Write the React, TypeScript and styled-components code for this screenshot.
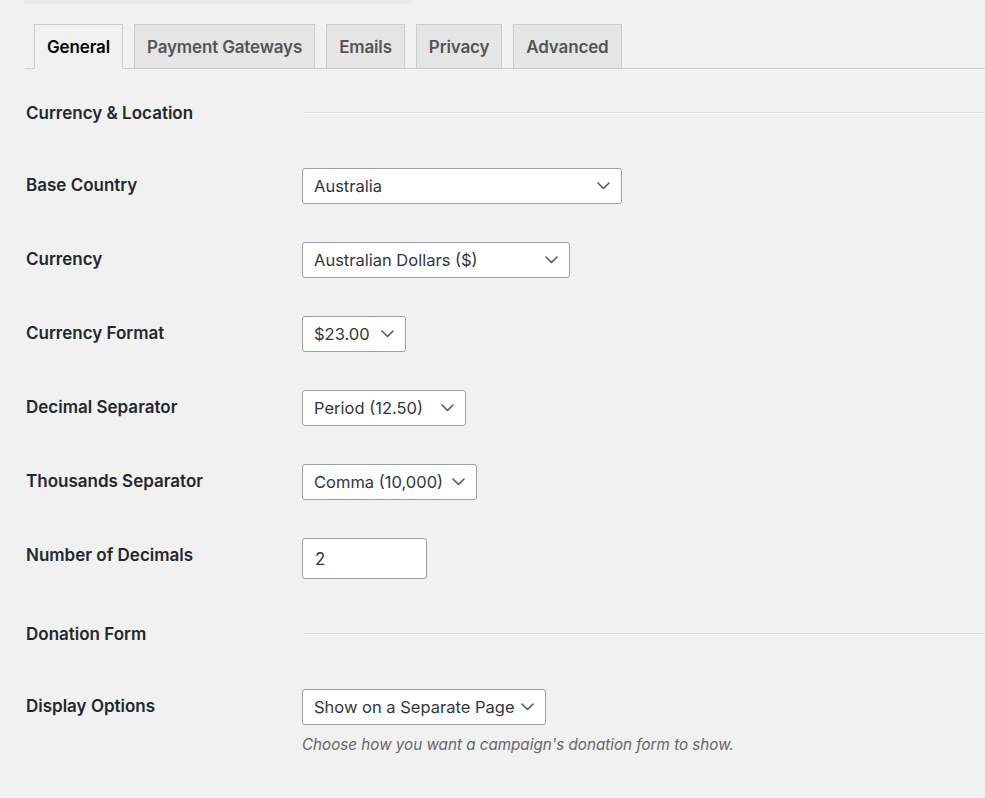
import React from 'react';
import styled, { createGlobalStyle } from 'styled-components';

const GlobalStyle = createGlobalStyle`
  html, body {
    margin: 0;
    padding: 0;
    background: #f1f1f1;
  }
  body {
    font-family: Inter, "Noto Sans", "Liberation Sans", sans-serif;
    color: #23282d;
  }
`;

const Page = styled.div`
  width: 985px;
  min-height: 798px;
  overflow: hidden;
`;

const TopStrip = styled.div`
  height: 3px;
  width: 388px;
  margin-left: 24px;
  background: #e9e9e9;
  border-bottom: 1px solid #ececec;
`;

const TabNav = styled.nav`
  display: flex;
  gap: 11px;
  margin: 20px 0 0 25px;
  padding-left: 9px;
  border-bottom: 1px solid #ccc;
`;

const Tab = styled.a<{ $active?: boolean }>`
  display: flex;
  align-items: center;
  height: 43px;
  padding: 0 12px;
  margin-bottom: -1px;
  border: 1px solid #ccc;
  border-bottom-color: ${(p) => (p.$active ? '#f1f1f1' : '#ccc')};
  background: ${(p) => (p.$active ? '#f1f1f1' : '#e5e5e5')};
  color: ${(p) => (p.$active ? '#000' : '#555')};
  font-size: 17px;
  font-weight: 600;
  letter-spacing: -0.15px;
  text-decoration: none;
  cursor: pointer;
`;

const Form = styled.div`
  display: flex;
  flex-direction: column;
  gap: 45px;
  padding: 34px 0 0 26px;
`;

const Section = styled.section`
  display: flex;
  flex-direction: column;
  gap: 38px;
`;

const SectionHead = styled.div`
  display: grid;
  grid-template-columns: 278px 1fr;
  align-items: center;
  height: 20px;
  margin-bottom: 7px;
`;

const SectionTitle = styled.h3`
  margin: 0;
  font-size: 17px;
  font-weight: 600;
  color: #23282d;
`;

const Rule = styled.hr`
  margin: 0;
  border: 0;
  border-top: 1px solid #dcdcdc;
  border-bottom: 1px solid #fafafa;
`;

const Row = styled.div`
  display: grid;
  grid-template-columns: 276px 1fr;
  align-items: start;
`;

const Label = styled.label`
  box-sizing: border-box;
  display: flex;
  align-items: center;
  height: 36px;
  padding-bottom: 2px;
  font-size: 17px;
  font-weight: 600;
  color: #23282d;
`;

const Field = styled.div`
  display: flex;
  flex-direction: column;
  align-items: flex-start;
`;

const SelectBox = styled.div<{ $width: number }>`
  box-sizing: border-box;
  display: flex;
  align-items: center;
  justify-content: space-between;
  width: ${(p) => p.$width}px;
  height: 36px;
  padding: 0 11px 0 11px;
  background: #fff;
  border: 1px solid #9a9fa5;
  border-radius: 3px;
  font-size: 16.5px;
  color: #32373c;
  white-space: nowrap;
`;

const TextInput = styled.div<{ $width: number }>`
  box-sizing: border-box;
  display: flex;
  align-items: center;
  width: ${(p) => p.$width}px;
  height: 41px;
  padding: 0 12px;
  background: #fff;
  border: 1px solid #9a9fa5;
  border-radius: 3px;
  font-size: 17px;
  color: #32373c;
`;

const Description = styled.p`
  margin: 10px 0 0;
  font-size: 15.2px;
  font-style: italic;
  line-height: 20px;
  color: #666;
`;

const Chevron = () => (
  <svg width="13" height="8" viewBox="0 0 13 8" fill="none">
    <polyline points="1,1 6.5,6.5 12,1" stroke="#555d66" strokeWidth="1.6" strokeLinecap="round" strokeLinejoin="round" />
  </svg>
);

type SelectProps = { value: string; width: number };

const Select: React.FC<SelectProps> = ({ value, width }) => (
  <SelectBox $width={width}>
    <span>{value}</span>
    <Chevron />
  </SelectBox>
);

const tabs = ['General', 'Payment Gateways', 'Emails', 'Privacy', 'Advanced'];

const App: React.FC = () => {
  return (
    <Page>
      <GlobalStyle />
      <TopStrip />
      <TabNav>
        {tabs.map((t) => (
          <Tab key={t} $active={t === 'General'}>{t}</Tab>
        ))}
      </TabNav>
      <Form>
        <Section>
          <SectionHead>
            <SectionTitle>Currency &amp; Location</SectionTitle>
            <Rule />
          </SectionHead>
          <Row>
            <Label>Base Country</Label>
            <Field><Select value="Australia" width={320} /></Field>
          </Row>
          <Row>
            <Label>Currency</Label>
            <Field><Select value="Australian Dollars ($)" width={268} /></Field>
          </Row>
          <Row>
            <Label>Currency Format</Label>
            <Field><Select value="$23.00" width={104} /></Field>
          </Row>
          <Row>
            <Label>Decimal Separator</Label>
            <Field><Select value="Period (12.50)" width={164} /></Field>
          </Row>
          <Row>
            <Label>Thousands Separator</Label>
            <Field><Select value="Comma (10,000)" width={175} /></Field>
          </Row>
          <Row>
            <Label>Number of Decimals</Label>
            <Field><TextInput $width={125}>2</TextInput></Field>
          </Row>
        </Section>
        <Section>
          <SectionHead>
            <SectionTitle>Donation Form</SectionTitle>
            <Rule />
          </SectionHead>
          <Row>
            <Label>Display Options</Label>
            <Field>
              <Select value="Show on a Separate Page" width={244} />
              <Description>Choose how you want a campaign's donation form to show.</Description>
            </Field>
          </Row>
        </Section>
      </Form>
    </Page>
  );
};

export default App;
